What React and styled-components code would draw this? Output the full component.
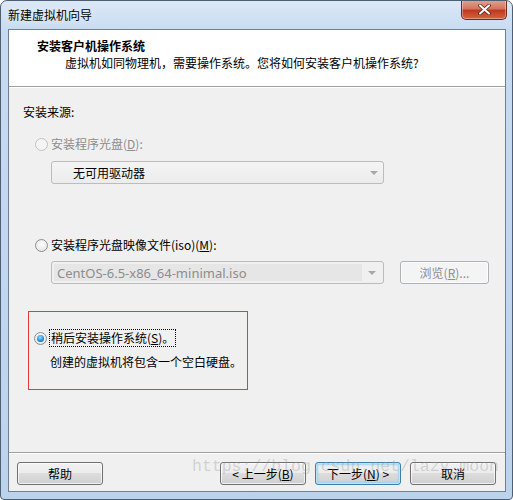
import React from 'react';
import styled, { createGlobalStyle } from 'styled-components';

const GlobalStyle = createGlobalStyle`
  html, body {
    margin: 0;
    padding: 0;
    background: #ffffff;
  }
  * { box-sizing: border-box; }
`;

const FONT = `"Noto Sans CJK SC", "Noto Sans", "Liberation Sans", sans-serif`;

const Window = styled.div`
  position: relative;
  width: 513px;
  height: 500px;
  padding: 0 6px 7px 7px;
  border: 1px solid #4f5f73;
  border-radius: 7px 7px 4px 4px;
  background: linear-gradient(180deg, #dbe8f6 0px, #c7dbf0 30px, #bcd3ec 100%);
  display: flex;
  flex-direction: column;
  font-family: ${FONT};
  font-size: 12px;
  color: #000;
  overflow: hidden;
`;

const TitleBar = styled.div`
  height: 28px;
  display: flex;
  align-items: flex-start;
  justify-content: space-between;
`;

const Title = styled.div`
  padding-top: 6px;
  font-size: 12px;
  line-height: 16px;
  color: #000;
  text-shadow: 0 0 8px rgba(255,255,255,0.9);
`;

const CloseButton = styled.div`
  width: 46px;
  height: 20px;
  margin-top: -1px;
  margin-right: -1px;
  border: 1px solid #6d2a22;
  border-top: none;
  border-radius: 0 0 5px 5px;
  background: linear-gradient(180deg, #e4a393 0%, #d47561 45%, #c0391f 55%, #d5643f 100%);
  display: flex;
  align-items: center;
  justify-content: center;
  box-shadow: inset 0 0 0 1px rgba(255,255,255,0.35);
`;

const Client = styled.div`
  flex: 1;
  display: flex;
  flex-direction: column;
  background: #f0f0f0;
  border: 1px solid #6e7f93;
`;

const Header = styled.div`
  height: 57px;
  background: #ffffff;
  border-bottom: 1px solid #a0a0a0;
  box-shadow: 0 1px 0 #ffffff;
  padding: 8px 0 0 28px;
`;

const HeaderTitle = styled.div`
  font-weight: bold;
  font-size: 12px;
  line-height: 16px;
`;

const HeaderSub = styled.div`
  padding-left: 28px;
  margin-top: 1px;
  line-height: 16px;
`;

const Body = styled.div`
  flex: 1;
  padding: 17px 0 0 14px;
  display: flex;
  flex-direction: column;
`;

const Label = styled.div`
  line-height: 16px;
`;

const RadioRow = styled.label`
  display: flex;
  align-items: center;
  gap: 3px;
  margin-top: ${p => p.$top}px;
  margin-left: ${p => p.$left ?? 12}px;
  line-height: 16px;
  color: ${p => (p.$disabled ? '#8d8d8d' : '#000')};
`;

const Mnemonic = styled.span`
  text-decoration: underline;
`;

const RadioCircle = styled.span`
  width: 13px;
  height: 13px;
  border-radius: 50%;
  border: 1px solid ${p => (p.$disabled ? '#c3c3c3' : '#8e8f8f')};
  background: ${p => (p.$disabled ? '#f4f4f4' : 'radial-gradient(circle at 50% 40%, #ffffff 0%, #e8e8e8 70%, #d6d6d6 100%)')};
  display: flex;
  align-items: center;
  justify-content: center;
  flex: none;
`;

const RadioDot = styled.span`
  width: 7px;
  height: 7px;
  border-radius: 50%;
  background: radial-gradient(circle at 45% 35%, #9ee0ff 0%, #2a8fd6 55%, #0d4c8f 100%);
`;

const FocusText = styled.span`
  outline: 1px dotted #000;
  padding: 0 1px;
`;

const FieldRow = styled.div`
  display: flex;
  align-items: center;
  gap: 16px;
  margin-top: ${p => p.$top}px;
  margin-left: 28px;
`;

const Combo = styled.div`
  width: 333px;
  height: 23px;
  border: 1px solid #bcbcbc;
  border-radius: 3px;
  background: ${p => (p.$edit ? '#f0f0f0' : 'linear-gradient(180deg, #f4f4f4 0%, #ececec 100%)')};
  display: flex;
  align-items: center;
  padding: ${p => (p.$edit ? '2px' : '0 0 0 21px')};
  color: ${p => (p.$edit ? '#8d8d8d' : '#000')};
  line-height: 16px;
`;

const ComboText = styled.div`
  flex: 1;
  height: 100%;
  display: flex;
  align-items: center;
  padding-left: ${p => (p.$edit ? '3px' : '0')};
  background: ${p => (p.$edit ? '#e6e6e6' : 'transparent')};
  font-family: ${p => (p.$edit ? `"Noto Sans", ${FONT}` : FONT)};
  font-size: ${p => (p.$edit ? '13px' : '12px')};
`;

const Arrow = styled.span`
  width: 19px;
  flex: none;
  display: flex;
  justify-content: center;
  &::after {
    content: '';
    border-left: 4px solid transparent;
    border-right: 4px solid transparent;
    border-top: 4px solid #a8a8a8;
  }
`;

const Button = styled.div`
  width: ${p => p.$w || 86}px;
  height: 23px;
  border: 1px solid ${p => (p.$default ? '#3c7fb1' : p.$disabled ? '#adb2b5' : '#707070')};
  border-radius: 3px;
  background: ${p => (p.$disabled ? '#f4f4f4' : 'linear-gradient(180deg, #f2f2f2 0%, #ebebeb 49%, #dddddd 50%, #cfcfcf 100%)')};
  box-shadow: ${p => (p.$default ? 'inset 0 0 0 1px #bfe4f7, inset 0 0 2px 2px #9ad3f0' : 'inset 0 0 0 1px rgba(255,255,255,0.7)')};
  display: flex;
  align-items: center;
  justify-content: center;
  line-height: 16px;
  white-space: nowrap;
  color: ${p => (p.$disabled ? '#8d8d8d' : '#000')};
`;

const Option = styled.div`
  width: 220px;
  height: 79px;
  margin-top: 27px;
  margin-left: 5px;
  border: 1px solid #e83a3a;
  display: flex;
  flex-direction: column;
`;

const OptionNote = styled.div`
  margin-top: 8px;
  margin-left: 21px;
  line-height: 16px;
`;

const Footer = styled.div`
  height: 39px;
  border-top: 1px solid #a0a0a0;
  box-shadow: inset 0 1px 0 #ffffff;
  display: flex;
  align-items: flex-start;
  padding: 9px 9px 0 8px;
`;

const Spacer = styled.div`
  flex: 1;
`;

const ButtonGroup = styled.div`
  display: flex;
  gap: 9px;
`;

const Watermark = styled.div`
  position: absolute;
  left: 191px;
  top: 455px;
  font-family: "Liberation Mono", "DejaVu Sans Mono", monospace;
  font-size: 16.5px;
  line-height: 22px;
  color: rgba(150, 150, 150, 0.35);
  pointer-events: none;
  white-space: nowrap;
`;

function Radio({ checked, disabled }) {
  return (
    <RadioCircle $disabled={disabled}>
      {checked && <RadioDot />}
    </RadioCircle>
  );
}

export default function App() {
  return (
    <>
      <GlobalStyle />
      <Window>
        <TitleBar>
          <Title>新建虚拟机向导</Title>
          <CloseButton>
            <svg width="13" height="11" viewBox="0 0 13 11">
              <path d="M2 1.5 L11 9.5 M11 1.5 L2 9.5" stroke="#5a1d14" strokeWidth="3.6" strokeLinecap="round" />
              <path d="M2 1.5 L11 9.5 M11 1.5 L2 9.5" stroke="#ffffff" strokeWidth="2.2" strokeLinecap="round" />
            </svg>
          </CloseButton>
        </TitleBar>
        <Client>
          <Header>
            <HeaderTitle>安装客户机操作系统</HeaderTitle>
            <HeaderSub>虚拟机如同物理机，需要操作系统。您将如何安装客户机操作系统?</HeaderSub>
          </Header>
          <Body>
            <Label>安装来源:</Label>
            <RadioRow $top={16} $disabled>
              <Radio disabled />
              <span>安装程序光盘(<Mnemonic>D</Mnemonic>):</span>
            </RadioRow>
            <FieldRow $top={9}>
              <Combo>
                <ComboText>无可用驱动器</ComboText>
                <Arrow />
              </Combo>
            </FieldRow>
            <RadioRow $top={53}>
              <Radio />
              <span>安装程序光盘映像文件(iso)(<Mnemonic>M</Mnemonic>):</span>
            </RadioRow>
            <FieldRow $top={8}>
              <Combo $edit>
                <ComboText $edit>CentOS-6.5-x86_64-minimal.iso</ComboText>
                <Arrow />
              </Combo>
              <Button $w={89} $disabled>浏览(<Mnemonic>R</Mnemonic>)...</Button>
            </FieldRow>
            <Option>
              <RadioRow $top={18} $left={5}>
                <Radio checked />
                <FocusText>稍后安装操作系统(<Mnemonic>S</Mnemonic>)。</FocusText>
              </RadioRow>
              <OptionNote>创建的虚拟机将包含一个空白硬盘。</OptionNote>
            </Option>
          </Body>
          <Footer>
            <Button>帮助</Button>
            <Spacer />
            <ButtonGroup>
              <Button>&lt; 上一步(<Mnemonic>B</Mnemonic>)</Button>
              <Button $default>下一步(<Mnemonic>N</Mnemonic>) &gt;</Button>
              <Button>取消</Button>
            </ButtonGroup>
          </Footer>
        </Client>
        <Watermark>https://blog.csdn.net/lazy_moon</Watermark>
      </Window>
    </>
  );
}
